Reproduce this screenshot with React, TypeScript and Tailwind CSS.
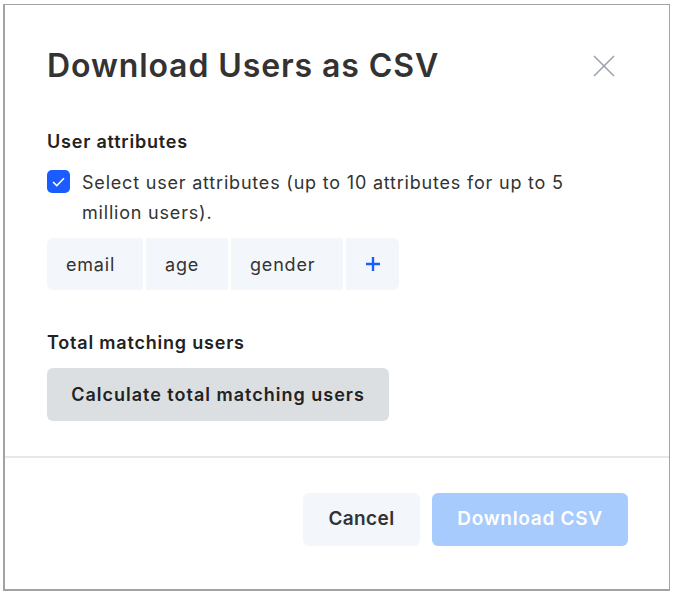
const chips = [
  { label: "email", w: "w-[96px] rounded-l-[6px]" },
  { label: "age", w: "w-[82px]" },
  { label: "gender", w: "w-[112px]" },
]

const App = () => {
  return (
    <div className="min-h-screen bg-white pl-[3px] pt-[4px] font-['Inter',sans-serif] text-[#333]">
      <div className="flex h-[587px] w-[667px] flex-col border-t border-l-2 border-r border-b-2 border-[#a3a3a3] bg-white">
        <div className="flex items-center justify-between pl-[42px] pr-[54px] pt-[39px]">
          <h1 className="text-[32px] font-semibold leading-[44px] tracking-[0.9px] text-[#333]">
            Download Users as CSV
          </h1>
          <svg width="22" height="22" viewBox="0 0 22 22" className="text-[#9ca3af]">
            <path d="M1 1L21 21M21 1L1 21" stroke="currentColor" strokeWidth="1.6" />
          </svg>
        </div>

        <div className="flex flex-col pl-[42px] pt-[42px]">
          <h2 className="text-[18px] font-semibold leading-[24px] tracking-[0.8px] text-[#222]">
            User attributes
          </h2>
          <div className="mt-[14px] flex gap-[12px]">
            <div className="mt-[2px] flex h-[23px] w-[23px] shrink-0 items-center justify-center rounded-[5px] bg-[#1a5cff]">
              <svg width="13" height="10" viewBox="0 0 13 10">
                <path d="M1 5L4.8 8.6L12 1.2" fill="none" stroke="white" strokeWidth="1.5" />
              </svg>
            </div>
            <p className="w-[500px] text-[18px] leading-[30px] tracking-[0.8px] text-[#333]">
              Select user attributes (up to 10 attributes for up to 5 million users).
            </p>
          </div>
          <div className="mt-[10px] flex gap-[3px]">
            {chips.map((c) => (
              <div
                key={c.label}
                className={`flex h-[52px] items-center bg-[#f3f6fb] pl-[19px] text-[18px] tracking-[0.8px] text-[#333] ${c.w}`}
              >
                {c.label}
              </div>
            ))}
            <div className="flex h-[52px] w-[53px] items-center justify-center rounded-r-[6px] bg-[#f3f6fb]">
              <svg width="16" height="16" viewBox="0 0 16 16">
                <path d="M8 1V15M1 8H15" stroke="#1a5cff" strokeWidth="2.4" />
              </svg>
            </div>
          </div>

          <h2 className="mt-[41px] text-[18px] font-semibold leading-[24px] tracking-[0.8px] text-[#222]">
            Total matching users
          </h2>
          <div className="mt-[13px]">
            <button className="h-[53px] w-[342px] rounded-[6px] bg-[#dcdfe2] text-[18px] font-semibold tracking-[1px] text-[#222]">
              Calculate total matching users
            </button>
          </div>
        </div>

        <div className="mt-[35px] h-[2px] bg-[#e4e7eb]" />

        <div className="flex justify-end gap-[12px] pr-[41px] pt-[35px]">
          <button className="h-[53px] w-[117px] rounded-[6px] bg-[#f3f6fb] text-[19px] font-semibold tracking-[0.4px] text-[#333]">
            Cancel
          </button>
          <button className="h-[53px] w-[196px] rounded-[6px] bg-[#a8cbfd] text-[19px] font-semibold tracking-[0.7px] text-white">
            Download CSV
          </button>
        </div>
      </div>
    </div>
  )
}

export default App
